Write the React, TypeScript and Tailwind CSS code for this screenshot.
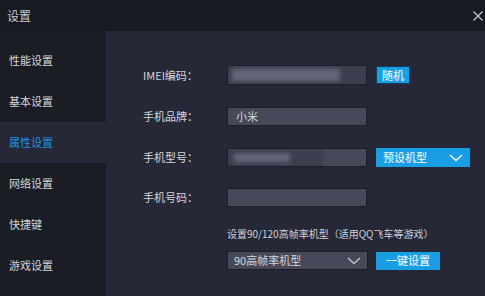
import React from "react";

const Chevron = ({ className }: { className?: string }) => (
  <svg width="14" height="8" viewBox="0 0 14 8" className={className} fill="none">
    <path d="M1 1l6 5.5L13 1" stroke="currentColor" strokeWidth="1.3" />
  </svg>
);

export default function App() {
  const items = ["性能设置", "基本设置", "属性设置", "网络设置", "快捷键", "游戏设置"];
  const inputCls =
    "h-[19px] w-[140px] bg-[#464959] border border-[#1c1e27] text-[11px] text-[#d6d7dc] px-[8px] flex items-center relative overflow-hidden";
  return (
    <div
      className="w-[485px] h-[296px] bg-[#181a21] flex flex-col overflow-hidden"
      style={{ fontFamily: '"Noto Sans CJK SC", "Noto Sans", sans-serif' }}
    >
      <div className="h-[31px] flex items-center justify-between pl-[7px] pr-[2px] shrink-0">
        <span className="text-[12px] text-[#c9cacf]">设置</span>
        <svg width="10" height="10" viewBox="0 0 10 10" className="text-[#c8c9ce]">
          <path d="M0.5 0.5l9 9M9.5 0.5l-9 9" stroke="currentColor" strokeWidth="1.2" />
        </svg>
      </div>
      <div className="flex flex-1">
        <div className="w-[106px] bg-[#1b1d25] pt-[9px] flex flex-col">
          {items.map((t, i) => (
            <div
              key={t}
              className={
                "h-[41px] flex items-center pl-[9px] text-[11px] " +
                (i === 2 ? "bg-[#262837] text-[#1d95dc]" : "text-[#d3d4d8]")
              }
            >
              {t}
            </div>
          ))}
        </div>
        <div className="flex-1 bg-[#262837] pl-[37px] pt-[34px] text-[11px] text-[#d6d7dc]">
          <div className="flex items-center h-[20px]">
            <span className="w-[84px]">IMEI编码：</span>
            <div className={inputCls + " h-[20px]"}>
              <div className="absolute left-[-6px] top-[-2px] w-[150px] h-[22px] bg-[#3b3e4e] blur-[2px]" />
              <div className="absolute left-[4px] top-[3px] w-[108px] h-[12px] bg-[#64677a] blur-[2px]" />
            </div>
            <button className="ml-[9px] h-[18px] w-[34px] bg-[#1a9ee3] border border-[#0f3e5c] text-[11px] text-white flex items-center justify-center">
              随机
            </button>
          </div>
          <div className="flex items-center h-[19px] mt-[22px]">
            <span className="w-[84px]">手机品牌：</span>
            <div className={inputCls}>小米</div>
          </div>
          <div className="flex items-center h-[19px] mt-[22px]">
            <span className="w-[84px]">手机型号：</span>
            <div className={inputCls}>
              <div className="absolute left-[-6px] top-[-2px] w-[100px] h-[22px] bg-[#3b3e4e] blur-[2px]" />
              <div className="absolute left-[6px] top-[4px] w-[56px] h-[9px] bg-[#64677a] blur-[2px]" />
            </div>
            <div className="ml-[9px] h-[19px] w-[94px] bg-[#1a9ee3] text-white flex items-center justify-between pl-[7px] pr-[7px]">
              <span>预设机型</span>
              <Chevron />
            </div>
          </div>
          <div className="flex items-center h-[19px] mt-[21px]">
            <span className="w-[84px]">手机号码：</span>
            <div className={inputCls} />
          </div>
          <div className="ml-[84px] mt-[18px] h-[16px] flex items-center text-[10px] text-[#cfd0d5]">
            设置90/120高帧率机型（适用QQ飞车等游戏）
          </div>
          <div className="ml-[84px] mt-[10px] flex items-center">
            <div className="h-[19px] w-[141px] bg-[#464959] border border-[#1c1e27] text-[#d6d7dc] flex items-center justify-between pl-[6px] pr-[6px]">
              <span>90高帧率机型</span>
              <Chevron className="text-[#c6c7cc]" />
            </div>
            <button className="ml-[8px] h-[18px] w-[64px] bg-[#1a9ee3] text-white text-[11px] flex items-center justify-center">
              一键设置
            </button>
          </div>
        </div>
      </div>
    </div>
  );
}
